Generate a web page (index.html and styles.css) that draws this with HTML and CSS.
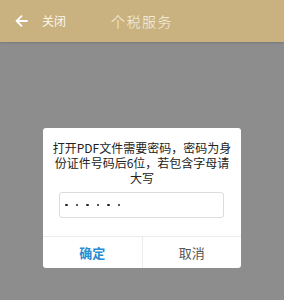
FILE: index.html
```html
<!DOCTYPE html>
<html>
<head>
<meta charset="utf-8">
<link rel="stylesheet" href="styles.css">
</head>
<body>
<div class="page">
  <header class="bar">
    <div class="back">
      <svg class="arrow" width="13" height="12" viewBox="0 0 13 12"><path d="M12 6H1.8M6.5 1.2L1.6 6l4.9 4.8" fill="none" stroke="#fff" stroke-width="1.8" stroke-linecap="round" stroke-linejoin="round"/></svg>
      <span class="close">关闭</span>
    </div>
    <div class="title">个税服务</div>
  </header>
  <main class="overlay">
    <div class="dialog">
      <p class="msg">打开PDF文件需要密码，密码为身<br>份证件号码后6位，若包含字母请<br>大写</p>
      <div class="input">
        <span class="dot"></span><span class="dot"></span><span class="dot"></span><span class="dot"></span><span class="dot"></span><span class="dot"></span>
      </div>
      <div class="actions">
        <div class="btn ok">确定</div>
        <div class="btn cancel">取消</div>
      </div>
    </div>
  </main>
</div>
</body>
</html>
```
FILE: styles.css
```css
* { box-sizing: border-box; }
html, body { margin: 0; padding: 0; }
body {
  width: 284px;
  height: 300px;
  font-family: "Noto Sans CJK SC", "Noto Sans", sans-serif;
  overflow: hidden;
}
.page { display: flex; flex-direction: column; height: 300px; }
.bar {
  height: 42px;
  background: #c9b280;
  display: flex;
  align-items: center;
  padding-left: 15px;
  flex-shrink: 0;
  box-shadow: 0 1px 2px rgba(0,0,0,0.15);
  position: relative;
  z-index: 1;
}
.back { display: flex; align-items: center; }
.arrow { display: block; }
.close {
  color: #fbf7ee;
  font-size: 12px;
  line-height: 14px;
  margin-left: 14px;
}
.title {
  margin-left: 45px;
  color: #f8f2e2;
  font-size: 14px;
  letter-spacing: 1.5px;
  font-weight: 300;
  font-family: "Noto Sans CJK JP", "Noto Sans CJK SC", serif;
}
.overlay {
  flex: 1;
  background: #8d8d8d;
  padding-top: 86px;
  display: flex;
  justify-content: center;
  align-items: flex-start;
}
.dialog {
  width: 198px;
  height: 140px;
  background: #fff;
  border-radius: 3px;
  display: flex;
  flex-direction: column;
}
.msg {
  margin: 0;
  padding: 12px 4px 0;
  font-size: 12px;
  line-height: 15px;
  color: #222;
  text-align: center;
  white-space: nowrap;
}
.input {
  margin: 7px 17px 0 16px;
  height: 26px;
  border: 1px solid #dcdcdc;
  border-radius: 3px;
  display: flex;
  align-items: center;
  padding-left: 5px;
  gap: 8px;
}
.dot {
  width: 2.5px;
  height: 2.5px;
  border-radius: 50%;
  background: #222;
}
.actions {
  margin-top: auto;
  height: 32px;
  border-top: 1px solid #ececec;
  display: flex;
}
.btn {
  flex: 1;
  display: flex;
  align-items: center;
  justify-content: center;
  font-size: 13px;
}
.ok {
  color: #2a8bd0;
  font-weight: 700;
  border-right: 1px solid #ececec;
}
.cancel { color: #555; }
```
